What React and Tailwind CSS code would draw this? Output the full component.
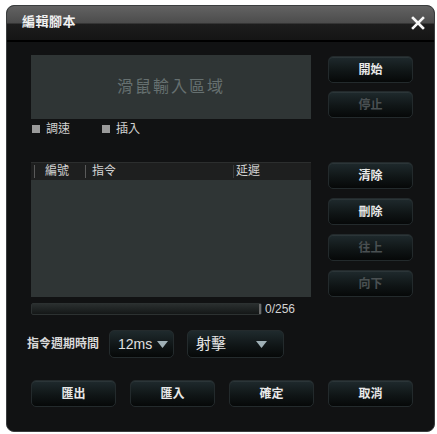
import React from 'react';

const font = { fontFamily: '"Liberation Sans", "Noto Sans CJK TC", sans-serif' };

const Btn = ({ label, disabled, className = '' }) => (
  <button
    className={`h-[27px] w-[85px] rounded-[5px] border border-[#232a2c] bg-[linear-gradient(to_bottom,#1f2a2d_0%,#101617_55%,#060808_100%)] text-[12px] font-bold shadow-[inset_0_1px_0_rgba(255,255,255,0.06)] ${disabled ? 'text-[#4a5052]' : 'text-[#e8e8e8]'} ${className}`}
  >
    {label}
  </button>
);

const Arrow = () => (
  <svg width="11" height="7" viewBox="0 0 11 7">
    <path d="M0 0 L11 0 L5.5 7 Z" fill="#9fb0b6" />
  </svg>
);

export default function App() {
  return (
    <div className="w-[437px] h-[434px] bg-white pt-[5px] pl-[6px]" style={font}>
      <div className="w-[429px] h-[427px] rounded-[8px] bg-[#111213] border border-[#3a3d3e] overflow-hidden flex flex-col">
        {/* title bar */}
        <div className="h-[36px] flex items-center justify-between pl-[15px] pr-[8px] bg-[linear-gradient(to_bottom,#626262_0%,#4c4c4c_50%,#1d1d1d_53%,#151515_100%)] border-b-2 border-black">
          <span className="text-[13px] font-bold text-[#f0f0f0] tracking-[0.5px] -mt-[2px]">編輯腳本</span>
          <svg width="14" height="14" viewBox="0 0 14 14" className="mr-[1px] -mt-[1px]">
            <path d="M2 2 L12 12 M12 2 L2 12" stroke="#f5f5f5" strokeWidth="2.6" strokeLinecap="square" />
          </svg>
        </div>

        <div className="flex-1 px-[24px] pt-[13px] pr-[21px]">
          {/* top section */}
          <div className="flex justify-between">
            <div className="w-[280px]">
              <div className="h-[64px] bg-[#2f3535] flex items-center justify-center">
                <span className="text-[16px] text-[#667070] tracking-[2px]">滑鼠輸入區域</span>
              </div>
              <div className="flex items-center h-[19px] text-[12px] text-[#d0d0d0]">
                <span className="w-[8px] h-[8px] bg-[#9a9a9a] ml-[1px] mr-[6px]"></span>
                <span>調速</span>
                <span className="w-[8px] h-[8px] bg-[#9a9a9a] ml-[32px] mr-[6px]"></span>
                <span>插入</span>
              </div>
            </div>
            <div className="flex flex-col gap-[8px] pt-[1px]">
              <Btn label="開始" />
              <Btn label="停止" disabled />
            </div>
          </div>

          {/* table section */}
          <div className="flex justify-between mt-[24px]">
            <div className="w-[280px] h-[135px] flex flex-col">
              <div className="h-[18px] bg-[#1e1f1f] border-t border-[#2c2e2e] flex items-center text-[12px] text-[#d4d4d4]">
                <span className="h-[13px] leading-[13px] border-l border-[#5a5a5a] ml-[3px] pl-[10px] w-[51px]">編號</span>
                <span className="h-[13px] leading-[13px] border-l border-[#5a5a5a] pl-[6px] w-[148px]">指令</span>
                <span className="h-[13px] leading-[13px] border-l border-[#3a3a3a] pl-[2px]">延遲</span>
              </div>
              <div className="flex-1 bg-[#2f3535]"></div>
            </div>
            <div className="flex flex-col gap-[9px]">
              <Btn label="清除" />
              <Btn label="刪除" />
              <Btn label="往上" disabled />
              <Btn label="向下" disabled />
            </div>
          </div>

          {/* progress */}
          <div className="flex items-center mt-[3px]">
            <div className="w-[231px] h-[12px] rounded-[2px] border border-[#2c3131] bg-[linear-gradient(to_bottom,#2a2f2f,#141717)] flex justify-end">
              <span className="w-[2px] h-full border-l border-r border-[#6a6a6a]"></span>
            </div>
            <span className="ml-[3px] text-[12px] text-[#d4d4d4]">0/256</span>
          </div>

          {/* period */}
          <div className="flex items-center mt-[12px] -ml-[4px]">
            <span className="text-[12px] text-[#d8d8d8] font-bold mr-[10px]">指令週期時間</span>
            <div className="h-[28px] w-[65px] rounded-[5px] border border-[#242b2d] bg-[linear-gradient(to_bottom,#1f2a2d_0%,#101617_55%,#060808_100%)] flex items-center pl-[8px] gap-[5px]">
              <span className="text-[14px] text-[#e0e0e0]">12ms</span>
              <Arrow />
            </div>
            <div className="h-[28px] w-[97px] ml-[13px] rounded-[5px] border border-[#242b2d] bg-[linear-gradient(to_bottom,#1f2a2d_0%,#101617_55%,#060808_100%)] flex items-center justify-between pl-[8px] pr-[16px]">
              <span className="text-[15px] text-[#e8e8e8]">射擊</span>
              <Arrow />
            </div>
          </div>

          {/* bottom buttons */}
          <div className="flex justify-between mt-[22px]">
            <Btn label="匯出" />
            <Btn label="匯入" />
            <Btn label="確定" />
            <Btn label="取消" />
          </div>
        </div>
      </div>
    </div>
  );
}
